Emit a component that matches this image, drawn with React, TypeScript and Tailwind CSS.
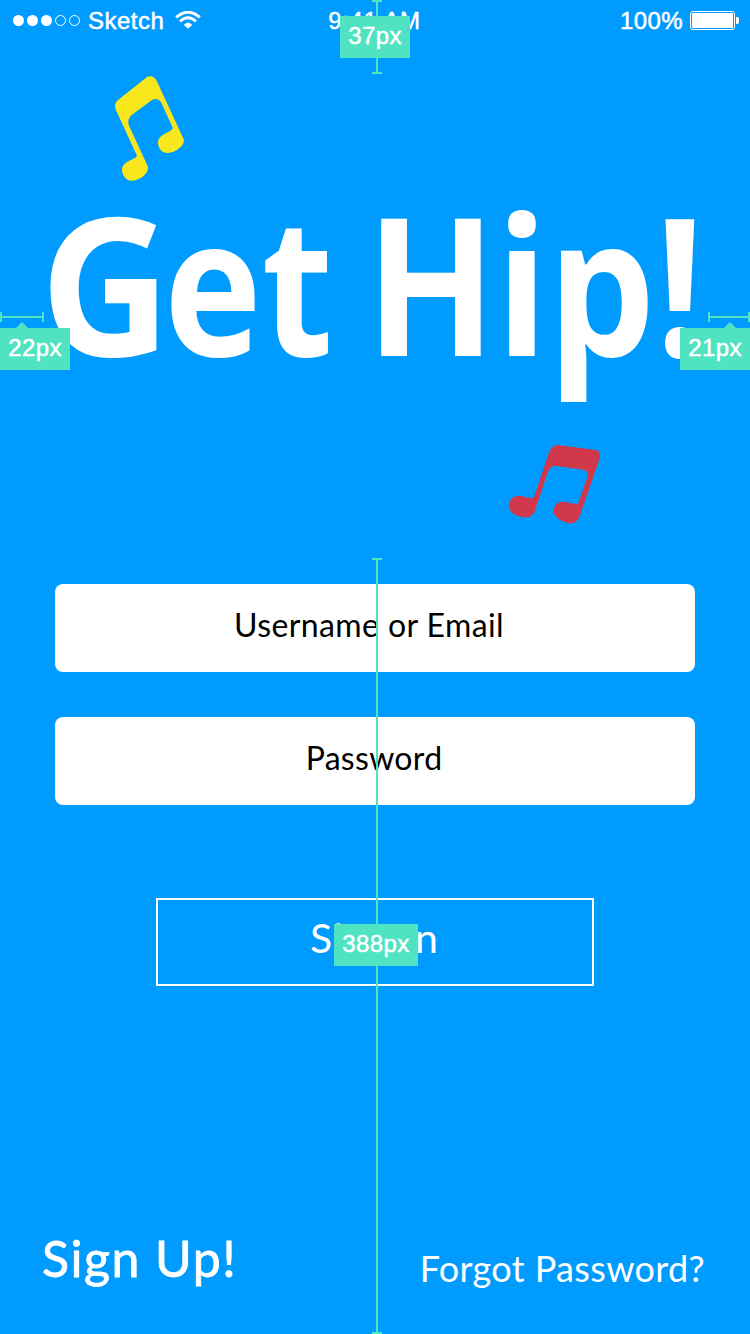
import React from "react";

function StatusBar() {
  return (
    <header className="grid h-10 shrink-0 grid-cols-3 items-center pl-[13px] pr-[11px] font-['Liberation_Sans',sans-serif] text-[24px] leading-10 [-webkit-text-stroke:0.5px_white]">
      <div className="flex items-center">
        <svg width="68" height="12" viewBox="0 0 68 12" className="shrink-0">
          <circle cx="5.5" cy="6.5" r="5.5" fill="white" />
          <circle cx="19.5" cy="6.5" r="5.5" fill="white" />
          <circle cx="33.5" cy="6.5" r="5.5" fill="white" />
          <circle cx="47.5" cy="6.5" r="5" fill="none" stroke="white" />
          <circle cx="61.5" cy="6.5" r="5" fill="none" stroke="white" />
        </svg>
        <span className="ml-[7px] pt-0.5 leading-[38px] tracking-[0.5px]">Sketch</span>
        <svg width="26" height="18" viewBox="0 0 26 18" className="ml-[11px] shrink-0" fill="none" stroke="white" strokeWidth="2.9">
          <path d="M1.2 6.3Q13-3.9 24.8 6.3" />
          <path d="M5 10.3Q13 3.4 21 10.3" />
          <path d="M8.8 14Q13 9 17.2 14L13 17.8Z" fill="white" stroke="none" />
        </svg>
      </div>
      <div className="pr-[3px] pt-0.5 text-center leading-[38px] tracking-[0.6px]">9:41 AM</div>
      <div className="flex items-center justify-end">
        <span className="pt-0.5 leading-[38px] tracking-[0.4px]">100%</span>
        <svg width="49" height="20" viewBox="0 0 49 20" className="ml-[7px] shrink-0">
          <rect x="0.5" y="1.5" width="44" height="18" rx="2.5" fill="none" stroke="white" />
          <rect x="2" y="3" width="41" height="15" rx="1.2" fill="white" />
          <path d="M46 7h1q2 0 2 2v3q0 2-2 2h-1z" fill="white" />
        </svg>
      </div>
    </header>
  );
}

function YellowNote() {
  return (
    <svg width="120" height="140" viewBox="0 0 360 420" className="ml-[90px] mt-5 shrink-0">
      <path
        fill="#f8e71c"
        d="M172 50L84 120Q72 130 76 146L141 287C136 300 96 302 96 330C98 355 115 363 128 362C148 360 176 343 174 320L116 195Q112 178 124 166L186 120Q204 112 214 128L249 205C236 222 204 222 204 250C206 270 218 280 234 279C256 278 283 258 282 240L200 62Q190 44 172 50Z"
      />
    </svg>
  );
}

function RedNote() {
  return (
    <svg width="130" height="110" viewBox="0 0 390 330" className="ml-[490px] shrink-0">
      <path
        fill="#d0394c"
        d="M203 45L318 60Q332 64 330 82L268 262Q260 280 240 280C220 278 190 262 190 242C194 215 215 212 230 217Q250 222 264 222L293 138Q294 122 280 119L200 108Q182 106 174 125L134 245Q126 262 108 262C85 262 55 250 56 225C62 198 82 195 96 199Q115 204 131 204L179 62Q188 45 203 45Z"
      />
    </svg>
  );
}

function Label({ className, children }: { className: string; children: string }) {
  return (
    <div
      className={`absolute flex h-[42px] items-center justify-center bg-[#50e3c2] font-['Liberation_Sans',sans-serif] text-[24px] leading-none tracking-[0.4px] [-webkit-text-stroke:0.5px_white] ${className}`}
    >
      <span className="-mt-[3px]">{children}</span>
    </div>
  );
}

function Measurements() {
  return (
    <>
      <div className="absolute left-[372px] top-0 flex h-[74px] w-[10px] justify-center border-y-2 border-[#50e3c2]">
        <div className="w-0.5 bg-[#50e3c2]" />
      </div>
      <Label className="left-[340px] top-4 w-[70px]">37px</Label>
      <div className="absolute left-0 top-[312px] flex h-[10px] w-11 items-center border-x-2 border-[#50e3c2]">
        <div className="h-0.5 w-full bg-[#50e3c2]" />
      </div>
      <div className="absolute left-4 top-[322px] h-[6px] w-3 bg-[#50e3c2] [clip-path:polygon(50%_0,100%_100%,0_100%)]" />
      <Label className="left-0 top-[328px] w-[70px]">22px</Label>
      <div className="absolute left-[708px] top-[312px] flex h-[10px] w-[42px] items-center border-x-2 border-[#50e3c2]">
        <div className="h-0.5 w-full bg-[#50e3c2]" />
      </div>
      <div className="absolute left-[724px] top-[322px] h-[6px] w-3 bg-[#50e3c2] [clip-path:polygon(50%_0,100%_100%,0_100%)]" />
      <Label className="left-[680px] top-[328px] w-[70px]">21px</Label>
      <div className="absolute left-[372px] top-[558px] flex h-[776px] w-[10px] justify-center border-y-2 border-[#50e3c2]">
        <div className="w-0.5 bg-[#50e3c2]" />
      </div>
      <Label className="left-[334px] top-[924px] w-[84px]">388px</Label>
    </>
  );
}

export default function App() {
  return (
    <main className="relative flex h-[1334px] w-[750px] flex-col overflow-hidden bg-[#009bff] font-['Lato',sans-serif] text-white">
      <StatusBar />
      <YellowNote />
      <h1 className="flex h-[230px] shrink-0 whitespace-nowrap pl-[40px] font-['Open_Sans',sans-serif] text-[192px] font-bold leading-[163px]">
        <span className="w-[124px] origin-left scale-x-[0.94]">G</span>
        <span className="w-[202px] origin-left scale-x-[0.86]">et</span>
        <span className="w-[340px] origin-left scale-x-[0.885]">Hip!</span>
      </h1>
      <RedNote />
      <form className="mt-11 flex flex-col items-center">
        <div className="flex h-[88px] w-[640px] justify-center rounded-lg bg-white pr-3 text-[32px] leading-[82px] tracking-[0.4px] text-black">
          Username or Email
        </div>
        <div className="mt-[45px] flex h-[88px] w-[640px] justify-center rounded-lg bg-white pr-0.5 text-[32px] leading-[82px] tracking-[0.3px] text-black">
          Password
        </div>
        <button
          type="button"
          className="mt-[93px] flex h-[88px] w-[438px] justify-center border-2 border-white pr-px text-[41px] leading-[76px] tracking-[1.2px]"
        >
          Sign In
        </button>
      </form>
      <nav className="mt-auto flex items-end justify-between pl-[42px] pr-[45px]">
        <a className="pb-[44px] text-[50px] leading-[64px] tracking-[1.5px] [-webkit-text-stroke:0.8px_white]">Sign Up!</a>
        <a className="pb-[34px] text-[36px] leading-[64px] tracking-[0.35px]">Forgot Password?</a>
      </nav>
      <Measurements />
    </main>
  );
}
